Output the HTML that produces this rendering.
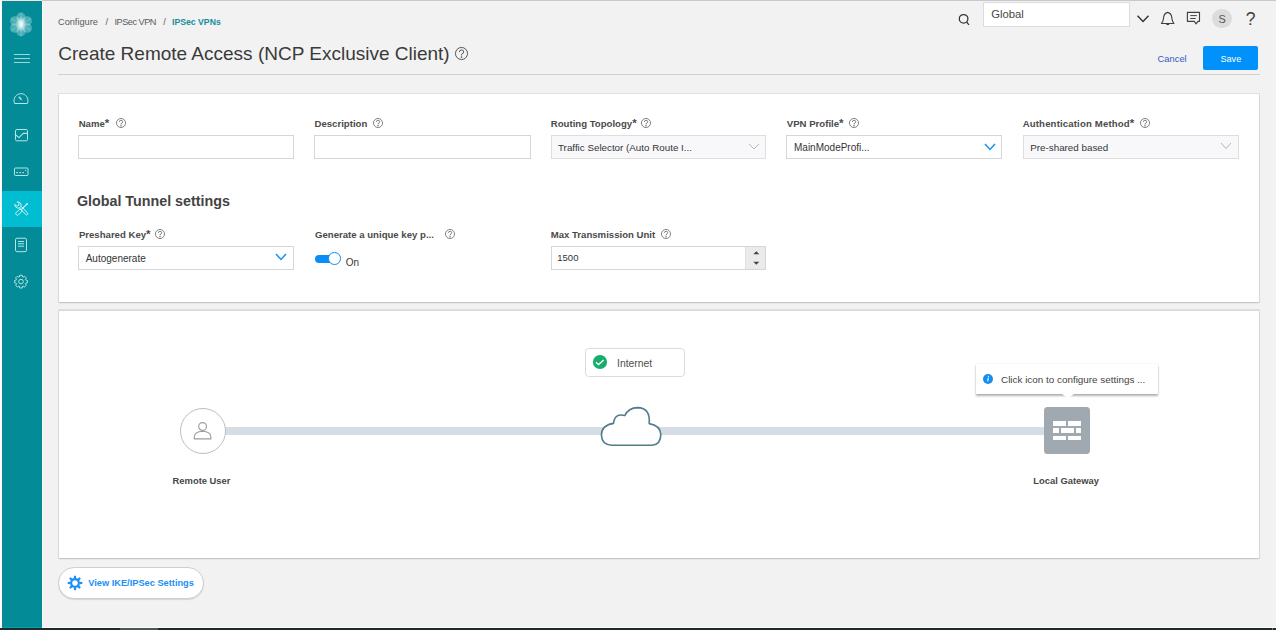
<!DOCTYPE html>
<html><head><meta charset="utf-8">
<style>
*{box-sizing:border-box;margin:0;padding:0}
html,body{width:1276px;height:630px;overflow:hidden;background:#f2f2f2;font-family:"Liberation Sans",sans-serif;color:#333}
.a{position:absolute}
.t{position:absolute;white-space:nowrap;line-height:1}
</style></head><body>

<!-- frame -->
<div class="a" style="left:0;top:0;width:2px;height:630px;background:#fff"></div>
<div class="a" style="left:2px;top:0;width:40px;height:1px;background:#fde0dc"></div>
<div class="a" style="left:42px;top:0;width:1234px;height:1px;background:#c9c9c9"></div>
<div class="a" style="left:2px;top:1px;width:40px;height:627px;background:#038c98"></div>
<div class="a" style="left:2px;top:627px;width:40px;height:1px;background:#00a0ac"></div>
<div class="a" style="left:42px;top:1px;width:1px;height:627px;background:#fff"></div>
<div class="a" style="left:43px;top:627px;width:1233px;height:1px;background:#fff"></div>
<div class="a" style="left:0;top:628px;width:1276px;height:2px;background:#1e2a2c"></div>
<div class="a" style="left:120px;top:628px;width:38px;height:2px;background:#4b5658"></div>
<!-- sidebar active -->
<div class="a" style="left:2px;top:191px;width:40px;height:36px;background:#00bdd1"></div>

<div class="a" style="left:1272px;top:628px;width:1px;height:2px;background:#6a7475"></div>
<!-- logo -->
<svg class="a" style="left:2px;top:1px" width="40" height="46" viewBox="0 0 40 46">
 <defs><radialGradient id="glow" cx="50%" cy="50%" r="50%"><stop offset="0" stop-color="#fff" stop-opacity="1"/><stop offset="0.35" stop-color="#f4fbfb" stop-opacity="0.85"/><stop offset="1" stop-color="#d8f1f1" stop-opacity="0"/></radialGradient></defs>
 <g fill="#c9ecec" fill-opacity="0.36">
  <ellipse cx="19" cy="16.6" rx="4.6" ry="5"/><ellipse cx="19" cy="30.4" rx="4.6" ry="5"/>
  <circle cx="12.9" cy="20" r="4.8"/><circle cx="25.1" cy="20" r="4.8"/>
  <circle cx="12.9" cy="27" r="4.8"/><circle cx="25.1" cy="27" r="4.8"/>
 </g>
 <g stroke="#e6f7f7" stroke-opacity="0.25" stroke-width="1">
  <line x1="19" y1="12" x2="19" y2="35"/><line x1="9" y1="17.5" x2="29" y2="29.5"/><line x1="9" y1="29.5" x2="29" y2="17.5"/>
 </g>
 <ellipse cx="19" cy="23.2" rx="5.5" ry="8" fill="url(#glow)"/>
</svg>
<!-- hamburger -->
<div class="a" style="left:14px;top:54px;width:16px;height:1.3px;background:#9ad8da"></div>
<div class="a" style="left:14px;top:58px;width:16px;height:1.3px;background:#9ad8da"></div>
<div class="a" style="left:14px;top:62px;width:16px;height:1.3px;background:#9ad8da"></div>
<svg class="a" style="left:0;top:80px" width="42" height="220" viewBox="0 80 42 220" fill="none" stroke="#b5e4e6" stroke-width="1">
 <!-- gauge -->
 <path d="M14.6 103.5 A7 7 0 1 1 27.4 103.5 Z" stroke-linejoin="round"/>
 <path d="M18.8 96.8 L21.6 99.8" stroke-width="1.4"/>
 <!-- check box -->
 <rect x="15.5" y="129.5" width="12" height="11.3" rx="1.3"/>
 <path d="M14.8 134.3 L19 137.6 L23.2 133.4 H27.5" stroke-width="1.1"/>
 <!-- card -->
 <rect x="14.5" y="168" width="13.5" height="7.5" rx="0.8"/>
 <g fill="#b5e4e6" stroke="none"><rect x="16.3" y="172" width="1.6" height="1.2"/><rect x="19.3" y="172" width="1.6" height="1.2"/><rect x="22.3" y="172" width="1.6" height="1.2"/><rect x="25" y="170" width="1.2" height="0.9"/></g>
 <!-- document -->
 <rect x="15.5" y="238.2" width="11" height="13.5" rx="1.5"/>
 <path d="M18 241.5 H24 M18 243.8 H24 M18 246.2 H24" stroke-width="1"/>
 <!-- gear -->
 <g transform="translate(21 281.6)">
  <path d="M-1.68 -4.60 L-1.13 -6.40 L1.13 -6.40 L1.68 -4.60 L2.07 -4.44 L3.73 -5.32 L5.32 -3.73 L4.44 -2.07 L4.60 -1.68 L6.40 -1.13 L6.40 1.13 L4.60 1.68 L4.44 2.07 L5.32 3.73 L3.73 5.32 L2.07 4.44 L1.68 4.60 L1.13 6.40 L-1.13 6.40 L-1.68 4.60 L-2.07 4.44 L-3.73 5.32 L-5.32 3.73 L-4.44 2.07 L-4.60 1.68 L-6.40 1.13 L-6.40 -1.13 L-4.60 -1.68 L-4.44 -2.07 L-5.32 -3.73 L-3.73 -5.32 L-2.07 -4.44 Z" stroke-linejoin="round"/>
  <circle r="2.3"/>
 </g>
</svg>
<!-- tools icon -->
<svg class="a" style="left:14px;top:201px" width="16" height="16" viewBox="0 0 16 16" fill="none" stroke="#dff5f7" stroke-width="0.9">
 <g transform="rotate(-45 8 8)">
  <rect x="6.8" y="5.2" width="2.4" height="10.5" rx="1.2"/>
  <path d="M6.4 5.2 Q5 4 5 2.3 Q5 0.6 6.3 -0.4 V2.2 L8 3.1 L9.7 2.2 V-0.4 Q11 0.6 11 2.3 Q11 4 9.6 5.2"/>
 </g>
 <g transform="rotate(45 8 8)">
  <rect x="6.4" y="9" width="3.2" height="7" rx="1.4"/>
  <path d="M8 9 V1.2" stroke-width="1.1"/>
  <path d="M7.4 1.6 L8 0.3 L8.6 1.6 Z" fill="#dff5f7"/>
 </g>
</svg>
<!-- header -->
<div class="t" style="left:58px;top:18.40px;font-size:9.2px;color:#5b5b5b">Configure</div>
<div class="t" style="left:105.5px;top:18.40px;font-size:9.2px;color:#5b5b5b">/</div>
<div class="t" style="left:114.5px;top:18.40px;font-size:9.2px;color:#5b5b5b;letter-spacing:-0.5px">IPSec VPN</div>
<div class="t" style="left:163.3px;top:18.40px;font-size:9.2px;color:#5b5b5b">/</div>
<div class="t" style="left:172px;top:17.65px;font-size:8.7px;color:#168e9a;font-weight:700">IPSec VPNs</div>
<div class="t" style="left:58.3px;top:44.00px;font-size:19px;color:#3a3a3a">Create Remote Access (NCP Exclusive Client)</div>
<svg class="a" style="left:454.20px;top:46.20px" width="15" height="15" viewBox="-7.5 -7.5 15 15"><circle r="6.05" fill="none" stroke="#555" stroke-width="1"/><path d="M-2.08 -1.43 Q-2.08 -3.58 0 -3.58 Q2.21 -3.58 2.21 -1.56 Q2.21 -0.13 0 0.78 V1.95" fill="none" stroke="#555" stroke-width="1"/><circle cy="3.64" r="0.83" fill="#555"/></svg>
<div class="a" style="left:58px;top:74px;width:1202px;height:1px;background:#d0d0d0"></div>
<svg class="a" style="left:956px;top:11px" width="16" height="16" viewBox="0 0 16 16" fill="none" stroke="#333" stroke-width="1.25"><circle cx="7.6" cy="7.8" r="4.3"/><path d="M10.6 11 L13 13.8"/></svg>
<div class="a" style="left:983px;top:2px;width:147px;height:25px;background:#fff;border:1px solid #dcdcdc"></div>
<div class="t" style="left:991.2px;top:8.55px;font-size:11.3px;color:#474747">Global</div>
<svg class="a" style="left:1135px;top:13px" width="16" height="12" viewBox="0 0 16 12" fill="none" stroke="#333" stroke-width="1.4"><path d="M2.5 2.8 L8 8.6 L13.5 2.8"/></svg>
<svg class="a" style="left:1159px;top:10px" width="17" height="17" viewBox="0 0 17 17" fill="none" stroke="#424242" stroke-width="1.15"><path d="M2.5 13.5 Q4.3 11.6 4.5 8.2 Q4.8 3.3 8.7 2.4 Q12.6 3.3 12.9 8.2 Q13.1 11.6 14.9 13.5 Z" stroke-linejoin="round"/><path d="M7.4 14 Q8.7 15.2 10 14"/></svg>
<svg class="a" style="left:1185px;top:10px" width="17" height="17" viewBox="0 0 17 17" fill="none" stroke="#424242" stroke-width="1.15"><path d="M2.4 2.4 H14.5 V11.3 H13 L11 13.9 L9.3 11.3 H2.4 Z" stroke-linejoin="round"/><path d="M5.3 5.6 H11.8 M5.2 8.5 H10.7" stroke-width="1"/></svg>
<div class="a" style="left:1212px;top:8.5px;width:19.5px;height:19.5px;border-radius:50%;background:#dcdcdc"></div>
<div class="t" style="left:1218.6px;top:13.50px;font-size:11px;color:#555">S</div>
<div class="t" style="left:1245.7px;top:11.25px;font-size:17.5px;color:#3c3c3c">?</div>
<div class="t" style="left:1157.5px;top:54.40px;font-size:9.4px;color:#3559c2">Cancel</div>
<div class="a" style="left:1203px;top:46px;width:55px;height:24px;background:#0091fb;border-radius:2px"></div>
<div class="t" style="left:1220.5px;top:55.05px;font-size:9.1px;color:#fff">Save</div>
<div class="a" style="left:59px;top:94px;width:1200px;height:207.5px;background:#fff;box-shadow:0 1px 1.5px rgba(0,0,0,0.15), 0 0 0 1px rgba(0,0,0,0.07)"></div>
<div class="t" style="left:78.7px;top:118.70px;font-size:9.6px;color:#4a4a4a;font-weight:700">Name<span style="font-size:11.5px;line-height:0;position:relative;top:0.8px">*</span></div>
<svg class="a" style="left:115.00px;top:117.30px" width="12" height="12" viewBox="-6.0 -6.0 12 12"><circle r="4.55" fill="none" stroke="#666" stroke-width="0.8"/><path d="M-1.60 -1.10 Q-1.60 -2.75 0 -2.75 Q1.70 -2.75 1.70 -1.20 Q1.70 -0.10 0 0.60 V1.50" fill="none" stroke="#666" stroke-width="0.8"/><circle cy="2.80" r="0.70" fill="#666"/></svg>
<div class="t" style="left:314.5px;top:118.70px;font-size:9.6px;color:#4a4a4a;font-weight:700">Description</div>
<svg class="a" style="left:371.50px;top:117.30px" width="12" height="12" viewBox="-6.0 -6.0 12 12"><circle r="4.55" fill="none" stroke="#666" stroke-width="0.8"/><path d="M-1.60 -1.10 Q-1.60 -2.75 0 -2.75 Q1.70 -2.75 1.70 -1.20 Q1.70 -0.10 0 0.60 V1.50" fill="none" stroke="#666" stroke-width="0.8"/><circle cy="2.80" r="0.70" fill="#666"/></svg>
<div class="t" style="left:550.8px;top:118.70px;font-size:9.6px;color:#4a4a4a;font-weight:700">Routing Topology<span style="font-size:11.5px;line-height:0;position:relative;top:0.8px">*</span></div>
<svg class="a" style="left:640.00px;top:117.30px" width="12" height="12" viewBox="-6.0 -6.0 12 12"><circle r="4.55" fill="none" stroke="#666" stroke-width="0.8"/><path d="M-1.60 -1.10 Q-1.60 -2.75 0 -2.75 Q1.70 -2.75 1.70 -1.20 Q1.70 -0.10 0 0.60 V1.50" fill="none" stroke="#666" stroke-width="0.8"/><circle cy="2.80" r="0.70" fill="#666"/></svg>
<div class="t" style="left:786.8px;top:118.70px;font-size:9.6px;color:#4a4a4a;font-weight:700">VPN Profile<span style="font-size:11.5px;line-height:0;position:relative;top:0.8px">*</span></div>
<svg class="a" style="left:847.50px;top:117.30px" width="12" height="12" viewBox="-6.0 -6.0 12 12"><circle r="4.55" fill="none" stroke="#666" stroke-width="0.8"/><path d="M-1.60 -1.10 Q-1.60 -2.75 0 -2.75 Q1.70 -2.75 1.70 -1.20 Q1.70 -0.10 0 0.60 V1.50" fill="none" stroke="#666" stroke-width="0.8"/><circle cy="2.80" r="0.70" fill="#666"/></svg>
<div class="t" style="left:1022.7px;top:118.70px;font-size:9.6px;color:#4a4a4a;font-weight:700"><span style="letter-spacing:0.15px">Authentication Method</span><span style="font-size:11.5px;line-height:0;position:relative;top:0.8px">*</span></div>
<svg class="a" style="left:1139.30px;top:117.30px" width="12" height="12" viewBox="-6.0 -6.0 12 12"><circle r="4.55" fill="none" stroke="#666" stroke-width="0.8"/><path d="M-1.60 -1.10 Q-1.60 -2.75 0 -2.75 Q1.70 -2.75 1.70 -1.20 Q1.70 -0.10 0 0.60 V1.50" fill="none" stroke="#666" stroke-width="0.8"/><circle cy="2.80" r="0.70" fill="#666"/></svg>
<div class="a" style="left:78px;top:135px;width:216px;height:24px;background:#fff;border:1px solid #d6d6d6"></div>
<div class="a" style="left:314px;top:135px;width:217px;height:24px;background:#fff;border:1px solid #d6d6d6"></div>
<div class="a" style="left:551px;top:135px;width:215px;height:24px;background:#f8f8fb;border:1px solid #dedede"></div>
<div class="a" style="left:786px;top:135px;width:216px;height:24px;background:#fff;border:1px solid #d6d6d6"></div>
<div class="a" style="left:1023px;top:135px;width:216px;height:24px;background:#f8f8fb;border:1px solid #dedede"></div>
<div class="t" style="left:558px;top:142.60px;font-size:9.8px;color:#353535">Traffic Selector (Auto Route I...</div>
<div class="t" style="left:794px;top:142.50px;font-size:10px;color:#353535">MainModeProfi...</div>
<div class="t" style="left:1030.3px;top:142.60px;font-size:9.8px;color:#353535">Pre-shared based</div>
<svg class="a" style="left:746.6px;top:141.9px" width="14" height="9" viewBox="-2 -2 14 9" fill="none" stroke="#b8b8b8" stroke-width="1"><path d="M0 0 L5.0 5 L10 0"/></svg>
<svg class="a" style="left:982.8px;top:141.6px" width="14" height="9.4" viewBox="-2 -2 14 9.4" fill="none" stroke="#1591f0" stroke-width="1.5"><path d="M0 0 L5.0 5.4 L10 0"/></svg>
<svg class="a" style="left:1218.6px;top:141.3px" width="14" height="9.6" viewBox="-2 -2 14 9.6" fill="none" stroke="#b4b4b4" stroke-width="1"><path d="M0 0 L5.0 5.6 L10 0"/></svg>
<div class="t" style="left:76.9px;top:193.55px;font-size:14.3px;color:#434343;font-weight:700">Global Tunnel settings</div>
<div class="t" style="left:78.9px;top:229.70px;font-size:9.6px;color:#4a4a4a;font-weight:700">Preshared Key<span style="font-size:11.5px;line-height:0;position:relative;top:0.8px">*</span></div>
<svg class="a" style="left:154.20px;top:228.40px" width="12" height="12" viewBox="-6.0 -6.0 12 12"><circle r="4.55" fill="none" stroke="#666" stroke-width="0.8"/><path d="M-1.60 -1.10 Q-1.60 -2.75 0 -2.75 Q1.70 -2.75 1.70 -1.20 Q1.70 -0.10 0 0.60 V1.50" fill="none" stroke="#666" stroke-width="0.8"/><circle cy="2.80" r="0.70" fill="#666"/></svg>
<div class="t" style="left:315px;top:229.70px;font-size:9.6px;color:#4a4a4a;font-weight:700">Generate a unique key p...</div>
<svg class="a" style="left:443.80px;top:228.40px" width="12" height="12" viewBox="-6.0 -6.0 12 12"><circle r="4.55" fill="none" stroke="#666" stroke-width="0.8"/><path d="M-1.60 -1.10 Q-1.60 -2.75 0 -2.75 Q1.70 -2.75 1.70 -1.20 Q1.70 -0.10 0 0.60 V1.50" fill="none" stroke="#666" stroke-width="0.8"/><circle cy="2.80" r="0.70" fill="#666"/></svg>
<div class="t" style="left:550.7px;top:229.70px;font-size:9.6px;color:#4a4a4a;font-weight:700">Max Transmission Unit</div>
<svg class="a" style="left:660.30px;top:228.40px" width="12" height="12" viewBox="-6.0 -6.0 12 12"><circle r="4.55" fill="none" stroke="#666" stroke-width="0.8"/><path d="M-1.60 -1.10 Q-1.60 -2.75 0 -2.75 Q1.70 -2.75 1.70 -1.20 Q1.70 -0.10 0 0.60 V1.50" fill="none" stroke="#666" stroke-width="0.8"/><circle cy="2.80" r="0.70" fill="#666"/></svg>
<div class="a" style="left:78px;top:246px;width:216px;height:24px;background:#fff;border:1px solid #d6d6d6"></div>
<div class="t" style="left:85.7px;top:253.50px;font-size:10px;color:#353535">Autogenerate</div>
<svg class="a" style="left:273.9px;top:252.2px" width="14" height="9.4" viewBox="-2 -2 14 9.4" fill="none" stroke="#1591f0" stroke-width="1.5"><path d="M0 0 L5.0 5.4 L10 0"/></svg>
<div class="a" style="left:315px;top:255px;width:20px;height:7.5px;background:#0a8ef5;border-radius:4px"></div>
<div class="a" style="left:328.2px;top:252px;width:12.6px;height:12.6px;background:#fff;border:1.6px solid #0a8ef5;border-radius:50%"></div>
<div class="t" style="left:345.8px;top:258.00px;font-size:10px;color:#353535">On</div>
<div class="a" style="left:551px;top:246px;width:215px;height:24px;background:#fff;border:1px solid #d6d6d6"></div>
<div class="a" style="left:745px;top:247px;width:20px;height:22px;background:#ebebeb;border-left:1px solid #e0e0e0"></div>
<svg class="a" style="left:751px;top:249px" width="11" height="18" viewBox="0 0 11 18" fill="#444"><path d="M2.3 5.3 L5.3 2.3 L8.3 5.3 Z"/><path d="M2.3 12.7 L5.3 15.7 L8.3 12.7 Z"/></svg>
<div class="t" style="left:557.3px;top:253.35px;font-size:9.5px;color:#333">1500</div>
<div class="a" style="left:59px;top:310px;width:1200px;height:247.5px;background:#fff;border-top:1px solid #d8d8d8;box-shadow:0 1px 1.5px rgba(0,0,0,0.15), 0 0 0 1px rgba(0,0,0,0.07)"></div>
<div class="a" style="left:225px;top:427.3px;width:819px;height:7.3px;background:#d5dee5"></div>
<div class="a" style="left:179.5px;top:407.5px;width:46px;height:46px;background:#fff;border:1.2px solid #bdbdbd;border-radius:50%"></div>
<svg class="a" style="left:192px;top:420px" width="21" height="21" viewBox="0 0 21 21" fill="none" stroke="#9d9d9d" stroke-width="1.1"><circle cx="10.6" cy="6.5" r="3.9"/><path d="M2.3 18.9 V16.8 Q2.6 11.6 10.6 11.3 Q18.6 11.6 18.9 16.8 V18.9 Z" stroke-linejoin="round"/></svg>
<div class="t" style="left:172.6px;top:475.80px;font-size:9.4px;color:#484848;font-weight:700">Remote User</div>
<div class="a" style="left:585px;top:348px;width:100px;height:29px;background:#fff;border:1px solid #dcdcdc;border-radius:4px"></div>
<svg class="a" style="left:592px;top:354px" width="16" height="16" viewBox="0 0 16 16"><circle cx="8" cy="8" r="7.1" fill="#17ad6c"/><path d="M3.9 8.2 L6.6 10.5 L11.6 6" fill="none" stroke="#fff" stroke-width="1.35"/></svg>
<div class="t" style="left:617px;top:359.30px;font-size:10.4px;color:#505050">Internet</div>
<svg class="a" style="left:596px;top:402px" width="70" height="50" viewBox="596 402 70 50" fill="#fff" stroke="#4f7e89" stroke-width="1.6"><path d="M611.5 445.2 H652.3 Q660.8 444.6 660.8 434.3 Q660.3 425.6 649.2 423.6 Q650.6 407.8 637.6 407.6 Q628.6 407.7 624.8 415.6 Q614.8 412.8 613.5 423.4 Q601.6 425.2 601.4 435 Q601.9 444.8 611.5 445.2 Z" stroke-linejoin="round"/></svg>
<div class="a" style="left:1044px;top:407px;width:46px;height:46.5px;background:#a1a9b0;border-radius:3.5px"></div>
<div class="a" style="left:1053.3px;top:420.8px;width:12.7px;height:4.9px;background:#fff"></div>
<div class="a" style="left:1067.9px;top:420.8px;width:13.5px;height:4.9px;background:#fff"></div>
<div class="a" style="left:1053.3px;top:428.1px;width:5.3px;height:4.9px;background:#fff"></div>
<div class="a" style="left:1060.7px;top:428.1px;width:13.6px;height:4.9px;background:#fff"></div>
<div class="a" style="left:1076.4px;top:428.1px;width:5px;height:4.9px;background:#fff"></div>
<div class="a" style="left:1053.3px;top:435.5px;width:12.7px;height:4.9px;background:#fff"></div>
<div class="a" style="left:1067.9px;top:435.5px;width:13.5px;height:4.9px;background:#fff"></div>
<div class="t" style="left:1033.3px;top:475.80px;font-size:9.4px;color:#484848;font-weight:700">Local Gateway</div>
<div class="a" style="left:976.3px;top:364.4px;width:181.7px;height:29.3px;background:#fff;box-shadow:0 1.5px 2px rgba(0,0,0,0.3), 0 0 1px rgba(0,0,0,0.15)"></div>
<svg class="a" style="left:1058px;top:392px" width="20" height="8" viewBox="0 0 20 8"><path d="M1.5 0 L3.4 1.6 L10 6.6 L16.6 1.6 L18.5 0 Z" fill="#fff"/></svg>
<svg class="a" style="left:982px;top:373px" width="12" height="12" viewBox="0 0 12 12"><circle cx="6" cy="6" r="5" fill="#148ff0"/><path d="M6.3 4.6 L5.7 8.4" stroke="#fff" stroke-width="1.1"/><circle cx="6.5" cy="3.3" r="0.65" fill="#fff"/></svg>
<div class="t" style="left:1001px;top:374.75px;font-size:9.9px;color:#444">Click icon to configure settings ...</div>
<div class="a" style="left:57.6px;top:567px;width:146.4px;height:32px;background:#fff;border:1px solid #cfcfcf;border-radius:16px;box-shadow:0 1px 1px rgba(0,0,0,0.12)"></div>
<svg class="a" style="left:67px;top:574.5px" width="16" height="16" viewBox="-8 -8 16 16"><g fill="#1b8ff5"><path d="M-1.3 -4.6 L-0.9 -7.3 H0.9 L1.3 -4.6 Z" transform="rotate(0)"/><path d="M-1.3 -4.6 L-0.9 -7.3 H0.9 L1.3 -4.6 Z" transform="rotate(45)"/><path d="M-1.3 -4.6 L-0.9 -7.3 H0.9 L1.3 -4.6 Z" transform="rotate(90)"/><path d="M-1.3 -4.6 L-0.9 -7.3 H0.9 L1.3 -4.6 Z" transform="rotate(135)"/><path d="M-1.3 -4.6 L-0.9 -7.3 H0.9 L1.3 -4.6 Z" transform="rotate(180)"/><path d="M-1.3 -4.6 L-0.9 -7.3 H0.9 L1.3 -4.6 Z" transform="rotate(225)"/><path d="M-1.3 -4.6 L-0.9 -7.3 H0.9 L1.3 -4.6 Z" transform="rotate(270)"/><path d="M-1.3 -4.6 L-0.9 -7.3 H0.9 L1.3 -4.6 Z" transform="rotate(315)"/></g><circle r="3.9" fill="none" stroke="#1b8ff5" stroke-width="2.1"/></svg>
<div class="t" style="left:88.2px;top:579.17px;font-size:9.25px;color:#1b8ff5;font-weight:700">View IKE/IPSec Settings</div>
</body></html>
